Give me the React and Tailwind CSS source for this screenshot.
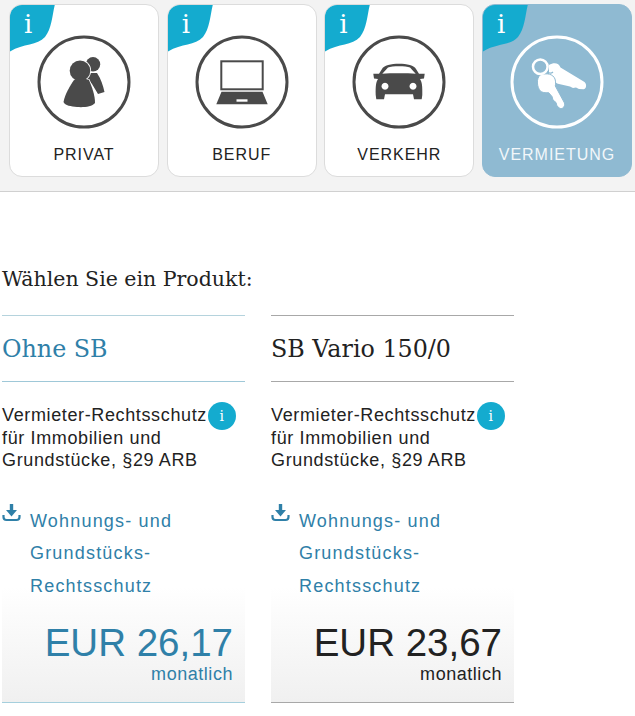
import React from 'react';

const sans = 'font-["Liberation_Sans",Arial,sans-serif]';
const serif = 'font-["DejaVu_Serif",serif]';

const People = () => (
  <g fill="#4a4a4a">
    <circle cx="9" cy="-17.7" r="7.2" />
    <path d="M2 -9 H13 C17 -3 19 3 20.5 10 L14 12 L8 2 L2 -5 Z" />
    <g stroke="#fff" strokeWidth="1.6" paintOrder="stroke">
      <path d="M-10 -2 H5 C8 5 11 13 11 21 C8 25 -1 25.5 -7 25 C-13 24.5 -19 23.5 -20.5 20 C-19 12 -14 4 -10 -2 Z" />
      <circle cx="-4" cy="-11.3" r="10.3" />
    </g>
    <path d="M-10 -2 L-4 -5 L5 -2 L5 3 L-9 3 Z" />
  </g>
);

const Laptop = () => (
  <g>
    <rect x="-20.7" y="-20.7" width="41.4" height="28" fill="none" stroke="#4a4a4a" strokeWidth="2" />
    <path d="M-20.5 9.7 H20.5 L25.7 22.3 H-25.7 Z" fill="#4a4a4a" />
    <rect x="-5.5" y="17.3" width="11" height="2.4" fill="#fff" />
  </g>
);

const Car = () => (
  <path
    fill="#4a4a4a"
    fillRule="evenodd"
    d="M-17 -13 C-14 -20 14 -20 17 -13 L20 -8.3 H25.7 L25 -3.5 L21 -3 C23 0 23.5 4 23.3 13 L22.7 17.3 H15 L14 12.3 H-14 L-15 17.3 H-22.7 L-23.3 13 C-23.5 4 -23 0 -21 -3 L-25 -3.5 L-25.7 -8.3 H-20 Z M-11 -14.5 L-16.7 -8.3 C-8 -8.8 8 -8.8 16.7 -8.3 L11 -14.5 C7 -16.3 -7 -16.3 -11 -14.5 Z M-14 0.8 a3.5 3.5 0 1 0 0.01 0 Z M14 0.8 a3.5 3.5 0 1 0 0.01 0 Z"
  />
);

const Keys = () => (
  <g>
    <path
      d="M-8 -17 C-3 -20 2 -19 3.5 -14.5 L27.5 0 C30 2 29.5 7 26.5 7.3 L22 7 L19 5.5 L16 6 L13 4.5 L2 2 C-3 1 -6 -4 -8 -8 Z"
      fill="#fff"
    />
    <path
      d="M-17 -7 C-10 -9.5 -4 -8 -2 -3 C-1 0 -1.5 2.5 -1.7 4 L7.5 21 C8.5 24 5.5 27.5 3 26.5 L0 24 L-1 20.5 L-4 18 L-5 14.5 L-8.3 10.7 C-12 11 -15 10.5 -16.7 9 C-20 5 -21 -3 -17 -7 Z"
      fill="#fff"
      stroke="#8fbad2"
      strokeWidth="1"
    />
    <circle cx="-16.7" cy="-15.3" r="7.3" fill="none" stroke="#fff" strokeWidth="2.5" />
    <path d="M-9.5 -10 C-7.5 -8.5 -5.5 -8.5 -4 -10" fill="none" stroke="#8fbad2" strokeWidth="1.2" />
  </g>
);

const tiles = [
  { label: 'PRIVAT', icon: <People /> },
  { label: 'BERUF', icon: <Laptop /> },
  { label: 'VERKEHR', icon: <Car /> },
  { label: 'VERMIETUNG', icon: <Keys />, active: true },
];

const Tile = ({ label, icon, active }) => (
  <div className={`relative h-[173px] w-[150px] overflow-hidden rounded-[13px] border ${active ? 'border-[#8fbad2] bg-[#8fbad2] text-[#f2f7fa]' : 'border-[#dcdcdc] bg-white text-[#222]'}`}>
    <svg className="absolute -left-px -top-px" width="47" height="48" viewBox="0 0 47 48">
      <path d="M0 0 H46 C43 12 43 24 36 33 C28 42 14 39 0 48 Z" fill="#14abcf" />
    </svg>
    <span className={`${serif} absolute left-[14px] top-[4px] text-[26px] leading-[30px] text-white`}>i</span>
    <svg className="mx-auto mt-[30px] block" width="94" height="94" viewBox="-47 -47 94 94">
      <circle r="45" fill="none" stroke={active ? '#fff' : '#4a4a4a'} strokeWidth="3" />
      {icon}
    </svg>
    <div className={`${sans} mt-[16px] text-center text-[16px] leading-5 tracking-[0.06em]`}>{label}</div>
  </div>
);

const Download = () => (
  <svg className="mt-[-2px] shrink-0" width="19" height="19" viewBox="0 0 19 19" fill="none">
    <path d="M9.5 1 V8" stroke="#2f80a8" strokeWidth="3.4" />
    <path d="M4 7 H15 L9.5 13.5 Z" fill="#2f80a8" />
    <path d="M1.5 12 V14 C1.5 16 3 17 4.5 17 H14.5 C16 17 17.5 16 17.5 14 V12" stroke="#2f80a8" strokeWidth="2.2" />
  </svg>
);

const Product = ({ name, price, selected }) => (
  <div className={`w-[243px] ${sans}`}>
    <div className={`border-t ${selected ? 'border-[#b5d3dd]' : 'border-[#a8a8a8]'}`}>
      <h2 className={`${serif} h-[66px] border-b text-[23.8px] leading-[67px] ${selected ? 'border-[#9fc8d8] text-[#2f80a8]' : 'border-[#a8a8a8] text-[#222]'}`}>{name}</h2>
    </div>
    <div className="relative mt-[22px] text-[18px] leading-[22.5px] tracking-[0.035em] text-[#222]">
      <span className="relative">
        Vermieter-Rechtsschutz
        <span className="absolute left-[100%] top-[-3px] ml-px flex h-7 w-7 items-center justify-center rounded-full bg-[#14abcf] text-[14px] text-white">
          <span className={serif}>i</span>
        </span>
      </span>
      <br />
      für Immobilien und
      <br />
      Grundstücke, §29 ARB
    </div>
    <div className="mt-[33px] flex gap-[9px] text-[#2f80a8]">
      <Download />
      <div className="text-[18px] leading-[32.5px] tracking-[0.066em]">
        Wohnungs- und<br />Grundstücks-<br />Rechtsschutz
      </div>
    </div>
    <div className={`mt-[-15px] h-[116px] border-b bg-gradient-to-b from-white to-[#f0f0f0] pr-3 pt-[34px] text-right ${selected ? 'border-[#a5cfdd] text-[#2f80a8]' : 'border-[#a8a8a8] text-[#222]'}`}>
      <div className="text-[38.5px] leading-[44px]">{price}</div>
      <div className="text-[18px] leading-[18px] tracking-[0.03em]">monatlich</div>
    </div>
  </div>
);

export default function App() {
  return (
    <div className="min-h-[716px] bg-white">
      <div className="flex h-[192px] gap-[7.67px] border-b border-[#d0d0d0] bg-[#f3f3f3] pl-[9px] pt-1">
        {tiles.map((t) => (
          <Tile key={t.label} {...t} />
        ))}
      </div>
      <div className="pl-[2px]">
        <h1 className={`${serif} mt-[73px] text-[20.5px] leading-7 text-[#222]`}>Wählen Sie ein Produkt:</h1>
        <div className="mt-[22px] flex gap-[26px]">
          <Product name="Ohne SB" price="EUR 26,17" selected />
          <Product name="SB Vario 150/0" price="EUR 23,67" />
        </div>
      </div>
    </div>
  );
}
